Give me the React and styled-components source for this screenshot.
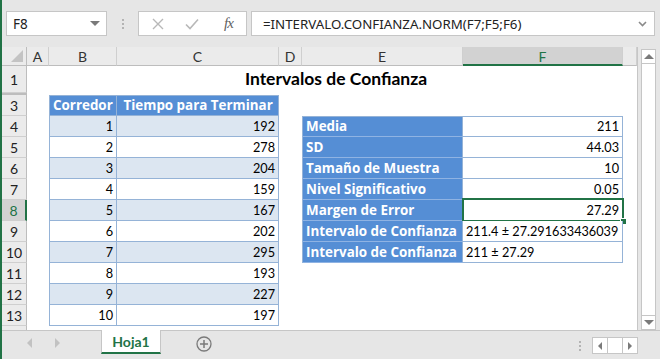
import React from "react";
import styled, { createGlobalStyle, css } from "styled-components";

const GREEN = "#217346";
const BLUE = "#558ed5";
const LIGHT = "#dce6f1";
const LINE = "#95b3d7";
const HEAD_BG = "#ebebeb";
const HEAD_LINE = "#cfcfcf";

const TIMES = [192, 278, 204, 159, 167, 202, 295, 193, 227, 197];

const STATS = [
  ["Media", "211"],
  ["SD", "44.03"],
  ["Tamaño de Muestra", "10"],
  ["Nivel Significativo", "0.05"],
  ["Margen de Error", "27.29", "right", true],
  ["Intervalo de Confianza", "211.4 ± 27.291633436039", "left"],
  ["Intervalo de Confianza", "211 ± 27.29", "left"],
];

const COLUMNS = ["A", "B", "C", "D", "E", "F", "G"];

const GlobalStyle = createGlobalStyle`
  html, body {
    margin: 0;
    padding: 0;
    background: #e6e6e6;
  }
  body {
    font-family: Lato, "Liberation Sans", sans-serif;
  }
`;

const Window = styled.div`
  width: 660px;
  height: 359px;
  box-sizing: border-box;
  border-left: 2px solid ${GREEN};
  background: #e6e6e6;
  display: flex;
  flex-direction: column;
  overflow: hidden;
`;

/* ---------- formula bar ---------- */

const FormulaBar = styled.div`
  height: 47px;
  flex: none;
  display: flex;
  align-items: center;
  padding-left: 4px;
  padding-right: 5px;
`;

const Box = styled.div`
  height: 25px;
  box-sizing: border-box;
  background: #fff;
  border: 1px solid #c6c6c6;
  display: flex;
  align-items: center;
`;

const NameBox = styled(Box)`
  width: 101px;
  padding: 0 6px 0 6px;
  justify-content: space-between;
  font-family: "Noto Sans", sans-serif;
  font-size: 13.5px;
  color: #222;
`;

const DropTriangle = styled.span`
  width: 0;
  height: 0;
  border-left: 5px solid transparent;
  border-right: 5px solid transparent;
  border-top: 5px solid #7a7a7a;
`;

const Dots = styled.div`
  width: 31px;
  display: flex;
  flex-direction: column;
  align-items: center;
  gap: 2px;
  span {
    width: 2px;
    height: 2px;
    background: #b3b3b3;
  }
`;

const ButtonsBox = styled(Box)`
  width: 109px;
  padding-left: 13px;
  gap: 21px;
`;

const Fx = styled.span`
  font-family: "Liberation Serif", serif;
  font-style: italic;
  font-size: 15px;
  color: #5f5f5f;
  margin-left: 4px;
  letter-spacing: -1px;
`;

const FormulaBox = styled(Box)`
  flex: 1;
  margin-left: 4px;
  padding: 0 7px 0 11px;
  justify-content: space-between;
  font-family: "Noto Sans", sans-serif;
  font-size: 13.3px;
  color: #222;
`;

/* ---------- sheet ---------- */

const Main = styled.div`
  display: flex;
  height: 284px;
  flex: none;
`;

const Sheet = styled.div`
  display: grid;
  grid-template-columns: 25px 22px 68px 162px 23px 161px 160px 14px;
  grid-template-rows: 19px 27px 2px repeat(11, 21px) 5px;
  width: 635px;
  background: #fff;
  font-family: Lato, "Liberation Sans", sans-serif;
  font-size: 12.7px;
  color: #000;
`;

const Corner = styled.div`
  grid-row: 1;
  grid-column: 1;
  background: ${HEAD_BG};
  border-right: 1px solid #bdbdbd;
  border-bottom: 1px solid #bdbdbd;
  box-sizing: border-box;
  position: relative;
  &::after {
    content: "";
    position: absolute;
    right: 3px;
    bottom: 3px;
    width: 0;
    height: 0;
    border-left: 12px solid transparent;
    border-bottom: 12px solid #c3c3c3;
  }
`;

const ColHead = styled.div`
  grid-row: 1;
  box-sizing: border-box;
  background: ${HEAD_BG};
  border-right: 1px solid ${HEAD_LINE};
  border-bottom: 1px solid #bdbdbd;
  display: flex;
  align-items: center;
  justify-content: center;
  font-size: 14px;
  color: #333;
  ${(p) =>
    p.$active &&
    css`
      background: #d2d2d2;
      color: ${GREEN};
      border-bottom: 2px solid ${GREEN};
      padding-top: 1px;
    `}
`;

const RowHead = styled.div`
  grid-column: 1;
  box-sizing: border-box;
  background: ${HEAD_BG};
  border-right: 1px solid #bdbdbd;
  border-bottom: 1px solid ${HEAD_LINE};
  display: flex;
  align-items: center;
  justify-content: center;
  font-size: 14px;
  color: #222;
  ${(p) =>
    p.$hidden &&
    css`
      border-top: 1px solid #bdbdbd;
      border-bottom: 1px solid #bdbdbd;
      background: #fff;
      border-right: 1px solid #bdbdbd;
    `}
  ${(p) =>
    p.$active &&
    css`
      background: #d2d2d2;
      color: ${GREEN};
      border-right: 2px solid ${GREEN};
    `}
`;

const Title = styled.div`
  grid-row: 2;
  grid-column: 3 / 8;
  display: flex;
  align-items: flex-end;
  justify-content: center;
  padding-bottom: 4px;
  font-weight: 700;
  font-size: 17.5px;
`;

const Cell = styled.div`
  box-sizing: border-box;
  position: relative;
  display: flex;
  align-items: flex-end;
  padding: 0 3px 2px 3px;
  white-space: nowrap;
  background: ${(p) => (p.$head ? BLUE : p.$alt ? LIGHT : "#fff")};
  color: #000;
  justify-content: ${(p) => (p.$align === "left" ? "flex-start" : "flex-end")};
  border-right: 1px solid ${LINE};
  border-bottom: 1px solid ${(p) => (p.$head && p.$soft ? "#8fb3e3" : LINE)};
  ${(p) => p.$first && css`border-left: 1px solid ${LINE};`}
  ${(p) => p.$top && css`border-top: 1px solid ${LINE};`}
  ${(p) =>
    p.$head &&
    css`
      color: #fff;
      font-family: "Open Sans", sans-serif;
      font-weight: 700;
      font-size: 13.4px;
      padding-bottom: 1px;
    `}
`;

const Selection = styled.div`
  position: absolute;
  top: -2px;
  left: -1px;
  right: -2px;
  bottom: -2px;
  border: 2px solid ${GREEN};
  pointer-events: none;
  &::after {
    content: "";
    position: absolute;
    right: -5px;
    bottom: -5px;
    width: 5px;
    height: 5px;
    background: ${GREEN};
    border: 1px solid #fff;
  }
`;

/* ---------- vertical scrollbar ---------- */

const ScrollCol = styled.div`
  width: 23px;
  box-sizing: border-box;
  border-left: 1px solid #c6c6c6;
  padding: 2px 4px 1px 3px;
  display: flex;
`;

const VTrack = styled.div`
  flex: 1;
  display: flex;
  flex-direction: column;
  justify-content: space-between;
  background: #fff;
  border: 1px solid #c6c6c6;
`;

const VButton = styled.div`
  height: 13px;
  display: flex;
  align-items: center;
  justify-content: center;
  border-${(p) => (p.$down ? "top" : "bottom")}: 1px solid #c6c6c6;
  &::before {
    content: "";
    width: 0;
    height: 0;
    border-left: 5px solid transparent;
    border-right: 5px solid transparent;
    ${(p) =>
      p.$down
        ? css`border-top: 5px solid #7a7a7a;`
        : css`border-bottom: 5px solid #7a7a7a;`}
  }
`;

/* ---------- sheet tabs ---------- */

const TabBar = styled.div`
  flex: 1;
  display: flex;
  align-items: flex-start;
  border-top: 1px solid #c6c6c6;
  margin-top: -1px;
`;

const NavArrows = styled.div`
  width: 99px;
  height: 24px;
  display: flex;
  align-items: center;
  padding-left: 25px;
  gap: 23px;
  box-sizing: border-box;
`;

const Arrow = styled.span`
  width: 0;
  height: 0;
  border-top: 5px solid transparent;
  border-bottom: 5px solid transparent;
  ${(p) =>
    p.$right
      ? css`border-left: 5px solid #c2c2c2;`
      : css`border-right: 5px solid #c2c2c2;`}
`;

const Tab = styled.div`
  width: 60px;
  height: 24px;
  box-sizing: border-box;
  margin-top: -1px;
  background: #fff;
  border-left: 1px solid #c6c6c6;
  border-right: 1px solid #c6c6c6;
  border-bottom: 2px solid ${GREEN};
  display: flex;
  align-items: center;
  justify-content: center;
  font-family: Lato, sans-serif;
  font-weight: 700;
  font-size: 14px;
  color: ${GREEN};
`;

const AddSheet = styled.svg`
  margin: 5px 0 0 35px;
`;

const Spacer = styled.div`
  flex: 1;
`;

const TabDots = styled(Dots)`
  width: 8px;
  margin: 10px 8px 0 0;
`;

const HScroll = styled.div`
  display: flex;
  margin: 6px 22px 0 0;
  height: 15px;
  border: 1px solid #c6c6c6;
  background: #fff;
`;

const HButton = styled.div`
  width: 14px;
  display: flex;
  align-items: center;
  justify-content: center;
  border-left: ${(p) => (p.$mid ? "1px solid #c6c6c6" : "none")};
  border-right: ${(p) => (p.$mid ? "1px solid #c6c6c6" : "none")};
`;

const SmallArrow = styled.span`
  width: 0;
  height: 0;
  border-top: 4px solid transparent;
  border-bottom: 4px solid transparent;
  ${(p) =>
    p.$right
      ? css`border-left: 4px solid #7a7a7a;`
      : css`border-right: 4px solid #7a7a7a;`}
`;

const CancelIcon = () => (
  <svg width="12" height="12" viewBox="0 0 12 12">
    <path d="M1 1 L11 11 M11 1 L1 11" stroke="#b8b8b8" strokeWidth="1.4" />
  </svg>
);

const EnterIcon = () => (
  <svg width="14" height="12" viewBox="0 0 14 12">
    <path d="M1 6.5 L5 10.5 L13 1.5" stroke="#b8b8b8" strokeWidth="1.6" fill="none" />
  </svg>
);

const Chevron = () => (
  <svg width="9" height="6" viewBox="0 0 9 6">
    <path d="M1 1 L4.5 4.5 L8 1" stroke="#8a8a8a" strokeWidth="1.6" fill="none" />
  </svg>
);

export default function App() {
  const sheetRows = [];
  for (let r = 3; r <= 13; r++) sheetRows.push(r);

  return (
    <>
      <GlobalStyle />
      <Window>
        <FormulaBar>
          <NameBox>
            <span>F8</span>
            <DropTriangle />
          </NameBox>
          <Dots>
            <span />
            <span />
            <span />
          </Dots>
          <ButtonsBox>
            <CancelIcon />
            <EnterIcon />
            <Fx>fx</Fx>
          </ButtonsBox>
          <FormulaBox>
            <span>=INTERVALO.CONFIANZA.NORM(F7;F5;F6)</span>
            <Chevron />
          </FormulaBox>
        </FormulaBar>

        <Main>
          <Sheet>
            <Corner />
            {COLUMNS.map((c, i) => (
              <ColHead key={c} style={{ gridColumn: i + 2 }} $active={c === "F"}>
                {c !== "G" && c}
              </ColHead>
            ))}

            <RowHead style={{ gridRow: 2 }}>1</RowHead>
            <RowHead style={{ gridRow: 3 }} $hidden />
            {sheetRows.map((r) => (
              <RowHead key={r} style={{ gridRow: r + 1 }} $active={r === 8}>
                {r}
              </RowHead>
            ))}
            <RowHead style={{ gridRow: 15 }} />

            <Title>Intervalos de Confianza</Title>

            <Cell style={{ gridRow: 4, gridColumn: 3 }} $head $first $top $align="left">
              Corredor
            </Cell>
            <Cell style={{ gridRow: 4, gridColumn: 4 }} $head $top $align="left">
              &nbsp;Tiempo para Terminar
            </Cell>
            {TIMES.map((t, i) => (
              <React.Fragment key={i}>
                <Cell style={{ gridRow: i + 5, gridColumn: 3 }} $first $alt={i % 2 === 0}>
                  {i + 1}
                </Cell>
                <Cell style={{ gridRow: i + 5, gridColumn: 4 }} $alt={i % 2 === 0}>
                  {t}
                </Cell>
              </React.Fragment>
            ))}

            {STATS.map(([label, value, align, selected], i) => (
              <React.Fragment key={i}>
                <Cell
                  style={{ gridRow: i + 5, gridColumn: 6 }}
                  $head
                  $soft
                  $first
                  $top={i === 0}
                  $align="left"
                >
                  {label}
                </Cell>
                <Cell style={{ gridRow: i + 5, gridColumn: 7 }} $top={i === 0} $align={align}>
                  {value}
                  {selected && <Selection />}
                </Cell>
              </React.Fragment>
            ))}
          </Sheet>
          <ScrollCol>
            <VTrack>
              <VButton />
              <VButton $down />
            </VTrack>
          </ScrollCol>
        </Main>

        <TabBar>
          <NavArrows>
            <Arrow />
            <Arrow $right />
          </NavArrows>
          <Tab>Hoja1</Tab>
          <AddSheet width="16" height="16" viewBox="0 0 16 16">
            <circle cx="8" cy="8" r="7" fill="none" stroke="#7a7a7a" strokeWidth="1.3" />
            <path d="M8 4 V12 M4 8 H12" stroke="#7a7a7a" strokeWidth="1.5" />
          </AddSheet>
          <Spacer />
          <TabDots>
            <span />
            <span />
            <span />
          </TabDots>
          <HScroll>
            <HButton>
              <SmallArrow />
            </HButton>
            <HButton $mid />
            <HButton>
              <SmallArrow $right />
            </HButton>
          </HScroll>
        </TabBar>
      </Window>
    </>
  );
}
